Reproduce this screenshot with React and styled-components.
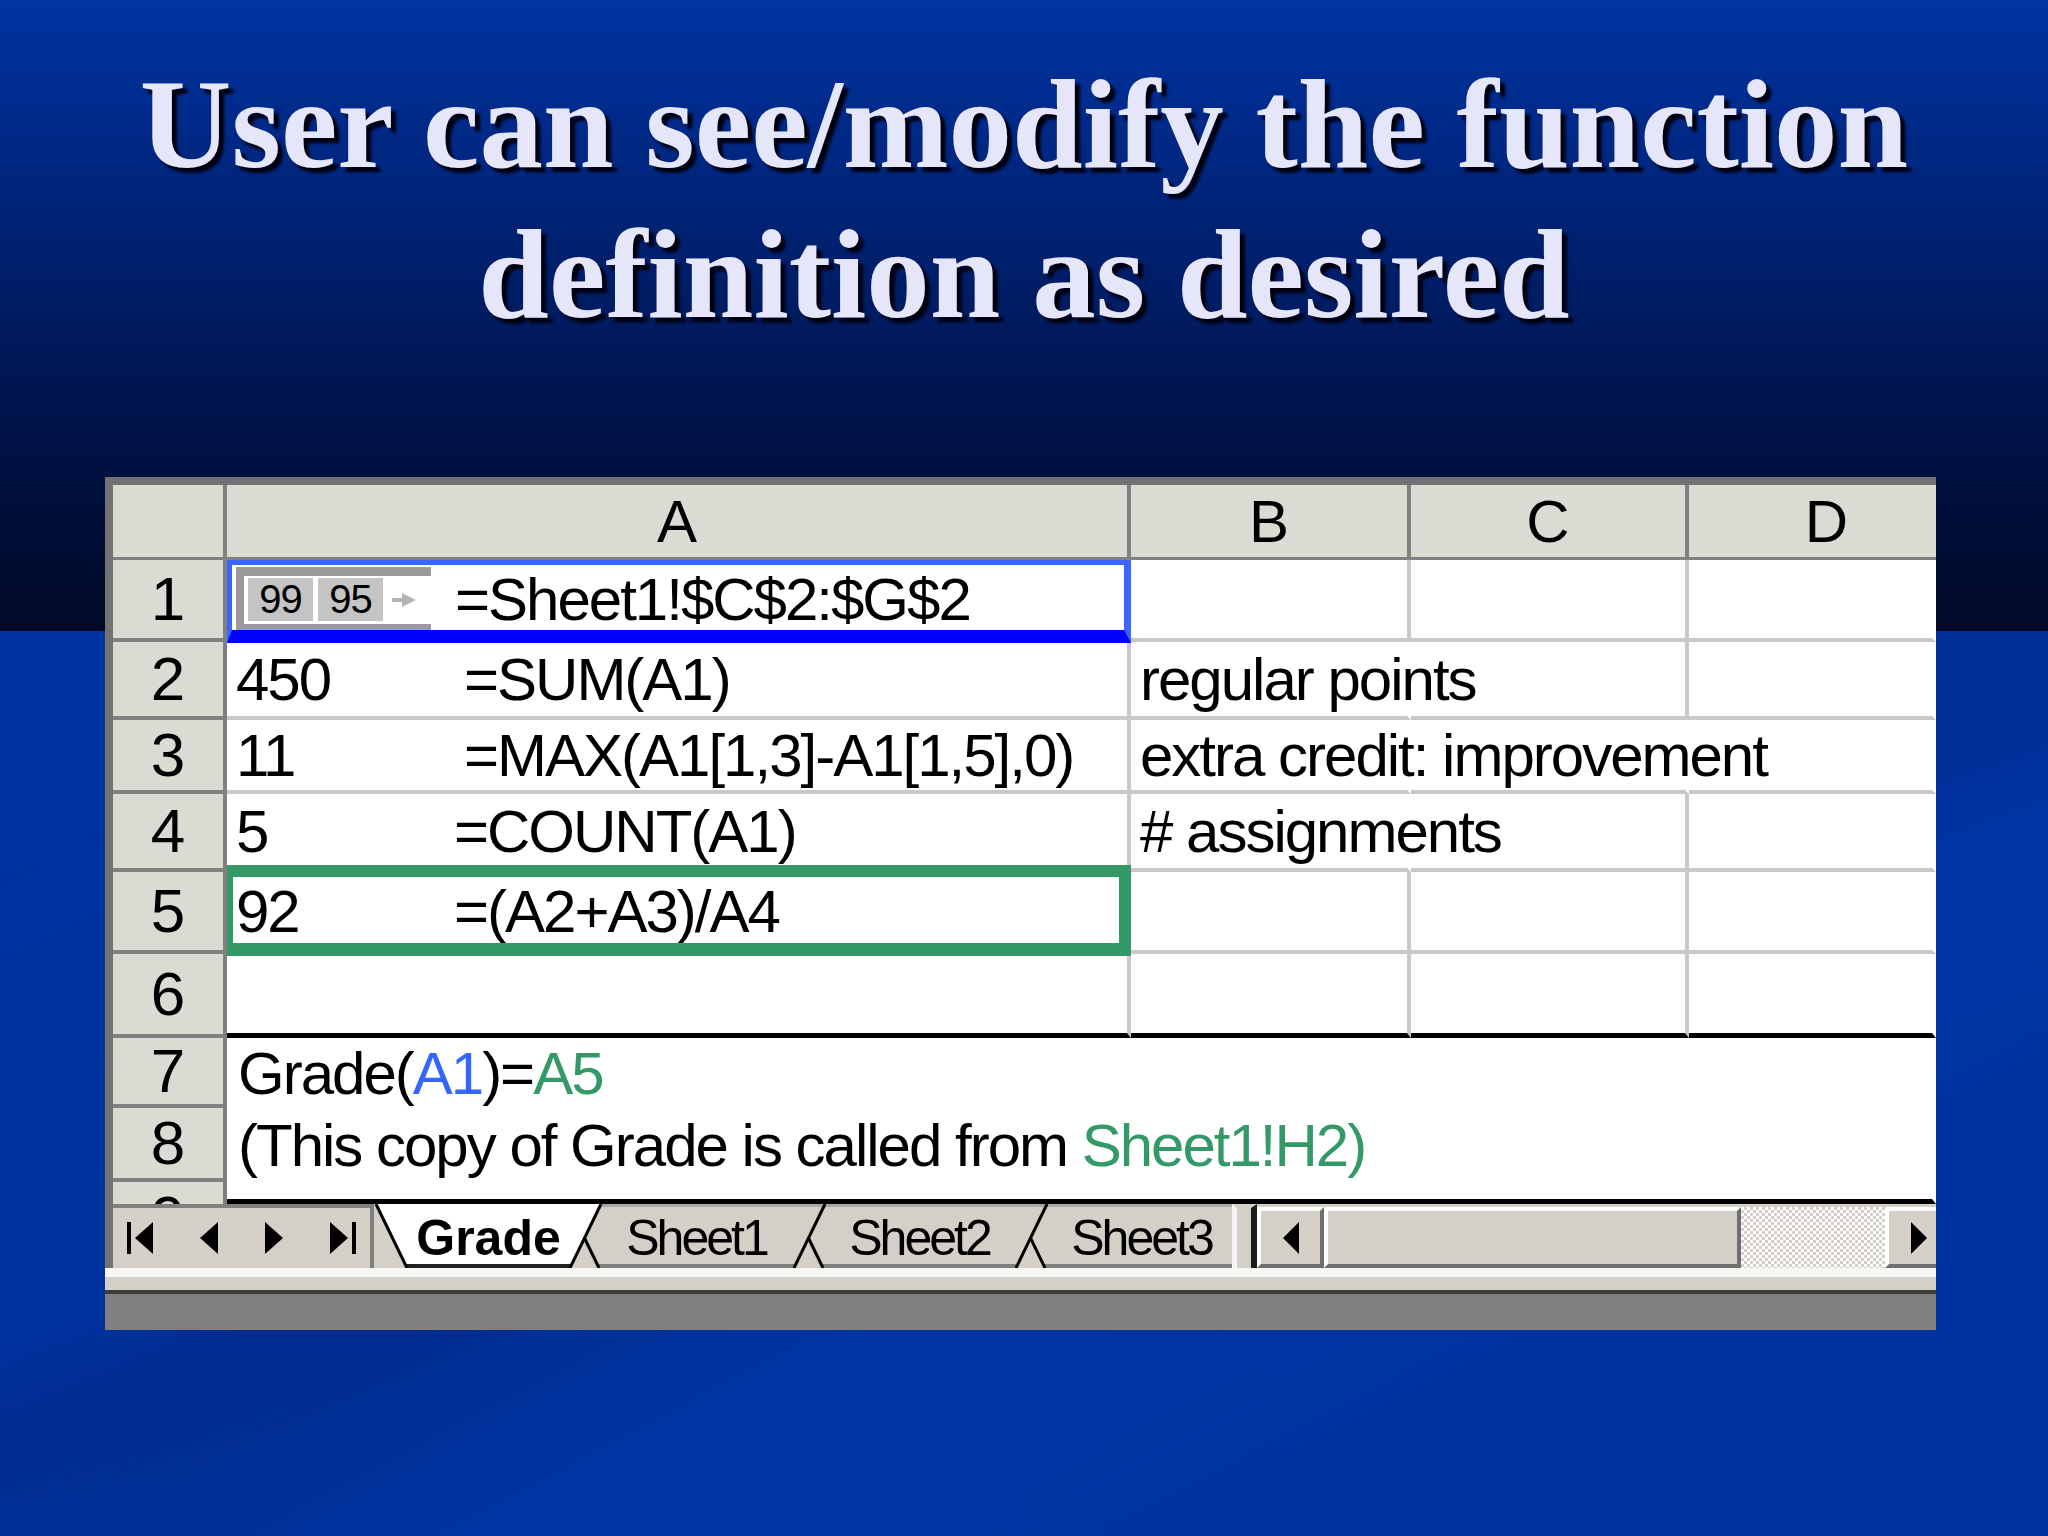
import React from 'react';
import styled, { createGlobalStyle } from 'styled-components';

const GlobalStyle = createGlobalStyle`
    *, *:before, *:after {
        box-sizing: border-box;
    }
    html, body {
        margin: 0;
        padding: 0;
    }
    body {
        width: 2048px;
        height: 1536px;
        overflow: hidden;
        font-family: "Liberation Sans", Arial, sans-serif;
    }
`;

const COLS = '114px 904px 280px 278px 247px';

const Slide = styled.div`
    width: 2048px;
    height: 1536px;
    padding-top: 49px;
    background:
        linear-gradient(to bottom, #0034a2 0px, #002b8c 110px, #001d66 290px, #001040 470px, #000a27 631px, transparent 631px),
        linear-gradient(160deg, transparent 58%, rgba(0, 20, 90, 0.18) 63%, transparent 68%),
        linear-gradient(152deg, #0034a3 0%, #0033a0 52%, #002f95 60%, #0034a2 68%, #0033a0 100%);
`;

const Title = styled.h1`
    margin: 0;
    font-family: "Liberation Serif", "Times New Roman", serif;
    font-weight: bold;
    font-size: 127px;
    line-height: 150px;
    text-align: center;
    color: #e6e6fa;
    text-shadow: 5px 5px 3px #00000f;
`;

const Window = styled.div`
    margin: 128px 0 0 105px;
    width: 1831px;
    background: #d4d0c8;
`;

const Frame = styled.div`
    border-top: 8px solid #727272;
    border-left: 8px solid #727272;
`;

const Sheet = styled.div`
    background: #fff;
    color: #000;
    font-family: "Liberation Sans", Arial, sans-serif;
`;

const Row = styled.div`
    display: grid;
    grid-template-columns: ${COLS};
    height: ${({ $h }) => $h}px;
`;

const ColHead = styled.div`
    background: #dcdbd3;
    border-right: ${({ $last }) => ($last ? 'none' : '4px solid #808080')};
    border-bottom: 3px solid #808080;
    display: flex;
    align-items: center;
    justify-content: center;
    padding-left: ${({ $last }) => ($last ? 28 : 0)}px;
    font-size: 60px;
`;

const RowHead = styled.div`
    background: #dcdbd3;
    border-right: 4px solid #808080;
    border-bottom: ${({ $partial }) => ($partial ? 'none' : '4px solid #808080')};
    display: flex;
    justify-content: center;
    align-items: ${({ $partial }) => ($partial ? 'flex-start' : 'center')};
    padding-top: ${({ $partial }) => ($partial ? '5px' : '0')};
    font-size: 62px;
    line-height: 62px;
    overflow: hidden;
`;

const Cell = styled.div`
    position: relative;
    display: flex;
    align-items: center;
    padding-left: ${({ $pad }) => ($pad != null ? $pad : 9)}px;
    border-right: 4px solid ${({ $noLine }) => ($noLine ? 'transparent' : '#c8c8c8')};
    border-bottom: ${({ $bottom }) => $bottom || '4px solid #c8c8c8'};
    grid-column: ${({ $span }) => $span || 'auto'};
    white-space: nowrap;
    font-size: 60px;
    letter-spacing: -2px;
`;

const Value = styled.span`
    display: inline-block;
    flex: none;
    width: ${({ $w }) => $w}px;
`;

const Ref = styled.span`
    color: ${({ $c }) => $c};
`;

const Selection = styled.div`
    position: absolute;
    z-index: 2;
    pointer-events: none;
    left: 0;
    right: -4px;
    top: ${({ $top }) => $top}px;
    bottom: ${({ $bottom }) => $bottom}px;
    border-style: solid;
    border-width: ${({ $widths }) => $widths};
    border-color: ${({ $colors }) => $colors};
`;

const ArrayBox = styled.div`
    flex: none;
    display: flex;
    align-items: center;
    gap: 5px;
    width: 195px;
    height: 65px;
    margin-right: 24px;
    padding-left: 4px;
    border-top: 9px solid #9a9a9a;
    border-left: 8px solid #9a9a9a;
    border-bottom: 8px solid #9a9a9a;
    background: #fff;
`;

const ArrayItem = styled.span`
    display: flex;
    align-items: center;
    justify-content: center;
    width: 65px;
    height: 43px;
    background: #c4c4c4;
    font-size: 40px;
    letter-spacing: -1px;
`;

const ArrayArrow = styled.svg`
    margin-left: 4px;
    flex: none;
`;

const TabBar = styled.div`
    display: flex;
    height: 64px;
    background: #d4d0c8;
`;

const NavArea = styled.div`
    flex: none;
    width: 261px;
    display: flex;
    align-items: center;
    gap: 47px;
    padding-left: 14px;
    border-top: 4px solid #808080;
    border-right: 4px solid #808080;
`;

const TabStrip = styled.div`
    flex: none;
    width: 858px;
    display: flex;
    overflow: hidden;
`;

const Tab = styled.div`
    position: relative;
    flex: none;
    width: ${({ $w }) => $w}px;
    margin-left: ${({ $first }) => ($first ? 1 : -35)}px;
    z-index: ${({ $z }) => $z};
    display: flex;
    align-items: center;
    justify-content: center;
    padding-top: 4px;
    font-size: 50px;
    font-weight: ${({ $active }) => ($active ? 'bold' : 'normal')};
    letter-spacing: ${({ $active }) => ($active ? '0' : '-3px')};
`;

const TabSvg = styled.svg`
    position: absolute;
    top: 0;
    left: 0;
`;

const TabLabel = styled.span`
    position: relative;
`;

const Splitter = styled.div`
    flex: none;
    width: 25px;
    border-left: 5px solid #f4f4f4;
    border-right: 6px solid #1c1c1c;
    border-top: 4px solid #d4d0c8;
`;

const ScrollBar = styled.div`
    flex: 1;
    display: flex;
    overflow: hidden;
    padding-top: 3px;
`;

const Raised = styled.div`
    flex: none;
    width: ${({ $w }) => $w}px;
    display: flex;
    align-items: center;
    justify-content: center;
    background: #d4d0c8;
    border-style: solid;
    border-width: 4px;
    border-color: #fff #6e6e6e #6e6e6e #fff;
`;

const Track = styled.div`
    flex: none;
    width: ${({ $w }) => $w}px;
    background-color: #fff;
    background-image: repeating-conic-gradient(#d4d0c8 0 25%, #fff 0 50%);
    background-size: 6px 6px;
`;

const BottomStrip = styled.div`
    height: 62px;
    background: linear-gradient(
        to bottom,
        #f6f6f2 0px,
        #f6f6f2 9px,
        #d4d0c8 9px,
        #d4d0c8 22px,
        #3c3c3c 22px,
        #3c3c3c 26px,
        #808080 26px
    );
`;

const Arrow = ({ dir, bar }) => {
    const w = bar ? 26 : 18;
    if (dir === 'left') {
        return (
            <svg width={w} height="32" viewBox={`0 0 ${w} 32`}>
                {bar && <rect x="0" y="0" width="4" height="32" fill="#000" />}
                <polygon points={`${w},0 ${w - 18},16 ${w},32`} fill="#000" />
            </svg>
        );
    }
    return (
        <svg width={w} height="32" viewBox={`0 0 ${w} 32`}>
            <polygon points="0,0 18,16 0,32" fill="#000" />
            {bar && <rect x="22" y="0" width="4" height="32" fill="#000" />}
        </svg>
    );
};

const ScrollArrow = ({ dir }) => (
    <svg width="16" height="32" viewBox="0 0 16 32">
        {dir === 'left' ? (
            <polygon points="16,0 0,16 16,32" fill="#000" />
        ) : (
            <polygon points="0,0 16,16 0,32" fill="#000" />
        )}
    </svg>
);

const TabOutline = ({ w, active }) => (
    <TabSvg width={w} height="64" viewBox={`0 0 ${w} 64`}>
        <polygon points={`0,0 ${w},0 ${w - 31},63 31,63`} fill={active ? '#fff' : '#d4d0c8'} />
        {!active && <line x1="0" y1="1.5" x2={w} y2="1.5" stroke="#a8a8a8" strokeWidth="3" />}
        <line x1="31" y1="62" x2={w - 31} y2="62" stroke={active ? '#202020' : '#808080'} strokeWidth="4" />
        <line x1="1" y1="0" x2="32" y2="64" stroke="#000" strokeWidth="3" />
        <line x1={w - 1} y1="0" x2={w - 32} y2="64" stroke="#000" strokeWidth="3" />
    </TabSvg>
);

const tabs = [
    { name: 'Grade', w: 227, active: true, z: 10 },
    { name: 'Sheet1', w: 259, z: 3 },
    { name: 'Sheet2', w: 257, z: 2 },
    { name: 'Sheet3', w: 257, z: 1 },
];

const formulaRows = [
    { n: 2, h: 78, value: '450', vw: 228, formula: '=SUM(A1)', b: 'regular points', bLine: false, cLine: true },
    { n: 3, h: 74, value: '11', vw: 228, formula: '=MAX(A1[1,3]-A1[1,5],0)', b: 'extra credit: improvement', bLine: false, cLine: false },
    { n: 4, h: 78, value: '5', vw: 218, formula: '=COUNT(A1)', b: '# assignments', bLine: false, cLine: true },
];

const BLUE_SEL = { top: 0, bottom: -5, widths: '5px 7px 13px 5px', colors: '#3a66ff #3a66ff #0000ff #3a66ff' };
const GREEN_SEL = { top: -7, bottom: -6, widths: '12px 12px 13px 6px', colors: '#339966' };

const App = () => {
    return (
        <Slide>
            <GlobalStyle />
            <Title>
                User can see/modify the function
                <br />
                definition as desired
            </Title>
            <Window>
                <Frame>
                    <Sheet>
                        <Row $h={75}>
                            <ColHead />
                            <ColHead>A</ColHead>
                            <ColHead>B</ColHead>
                            <ColHead>C</ColHead>
                            <ColHead $last>D</ColHead>
                        </Row>

                        <Row $h={82}>
                            <RowHead>1</RowHead>
                            <Cell>
                                <ArrayBox>
                                    <ArrayItem>99</ArrayItem>
                                    <ArrayItem>95</ArrayItem>
                                    <ArrayArrow width="26" height="16" viewBox="0 0 26 16">
                                        <rect x="0" y="6" width="12" height="4" fill="#b4b4b4" />
                                        <polygon points="10,1 24,8 10,15" fill="#b4b4b4" />
                                    </ArrayArrow>
                                </ArrayBox>
                                =Sheet1!$C$2:$G$2
                                <Selection $top={BLUE_SEL.top} $bottom={BLUE_SEL.bottom} $widths={BLUE_SEL.widths} $colors={BLUE_SEL.colors} />
                            </Cell>
                            <Cell />
                            <Cell />
                            <Cell $noLine />
                        </Row>

                        {formulaRows.map((r) => (
                            <Row key={r.n} $h={r.h}>
                                <RowHead>{r.n}</RowHead>
                                <Cell>
                                    <Value $w={r.vw}>{r.value}</Value>
                                    {r.formula}
                                </Cell>
                                <Cell $noLine={!r.bLine}>{r.b}</Cell>
                                <Cell $noLine={!r.cLine} />
                                <Cell $noLine />
                            </Row>
                        ))}

                        <Row $h={82}>
                            <RowHead>5</RowHead>
                            <Cell>
                                <Value $w={218}>92</Value>
                                =(A2+A3)/A4
                                <Selection $top={GREEN_SEL.top} $bottom={GREEN_SEL.bottom} $widths={GREEN_SEL.widths} $colors={GREEN_SEL.colors} />
                            </Cell>
                            <Cell />
                            <Cell />
                            <Cell $noLine />
                        </Row>

                        <Row $h={84}>
                            <RowHead>6</RowHead>
                            <Cell $bottom="5px solid #000" />
                            <Cell $bottom="5px solid #000" />
                            <Cell $bottom="5px solid #000" />
                            <Cell $noLine $bottom="5px solid #000" />
                        </Row>

                        <Row $h={70}>
                            <RowHead>7</RowHead>
                            <Cell $span="2 / -1" $pad={11} $noLine $bottom="none">
                                Grade(<Ref $c="#3366ff">A1</Ref>)=<Ref $c="#339966">A5</Ref>
                            </Cell>
                        </Row>

                        <Row $h={74}>
                            <RowHead>8</RowHead>
                            <Cell $span="2 / -1" $pad={11} $noLine $bottom="none">
                                (This copy of Grade is called from&nbsp;<Ref $c="#339966">Sheet1!H2)</Ref>
                            </Cell>
                        </Row>

                        <Row $h={22}>
                            <RowHead $partial>9</RowHead>
                            <Cell $span="2 / -1" $noLine $bottom="5px solid #000" />
                        </Row>
                    </Sheet>

                    <TabBar>
                        <NavArea>
                            <Arrow dir="left" bar />
                            <Arrow dir="left" />
                            <Arrow dir="right" />
                            <Arrow dir="right" bar />
                        </NavArea>
                        <TabStrip>
                            {tabs.map((t, i) => (
                                <Tab key={t.name} $w={t.w} $first={i === 0} $z={t.z} $active={t.active}>
                                    <TabOutline w={t.w} active={t.active} />
                                    <TabLabel>{t.name}</TabLabel>
                                </Tab>
                            ))}
                        </TabStrip>
                        <Splitter />
                        <ScrollBar>
                            <Raised $w={67}>
                                <ScrollArrow dir="left" />
                            </Raised>
                            <Raised $w={417} />
                            <Track $w={144} />
                            <Raised $w={67}>
                                <ScrollArrow dir="right" />
                            </Raised>
                        </ScrollBar>
                    </TabBar>
                </Frame>
                <BottomStrip />
            </Window>
        </Slide>
    );
};

export default App;
